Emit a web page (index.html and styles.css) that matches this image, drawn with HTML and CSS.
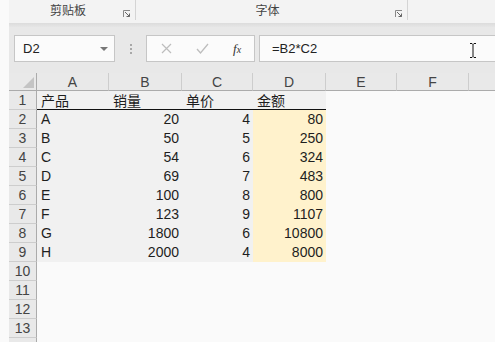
FILE: index.html
```html
<!DOCTYPE html>
<html lang="zh-CN">
<head>
    <meta charset="UTF-8">
    <title>Excel</title>
    <link rel="stylesheet" href="styles.css">
</head>
<body>
    <div class="window">
        <div class="ribbon">
            <div class="group g-clip">
                <span class="group-label">剪贴板</span>
                <svg class="launcher" width="8" height="8" viewBox="0 0 8 8"><path d="M0.5 7V0.5H7" fill="none" stroke="#888"/><path d="M2 2L6.5 6.5M3.5 6.5H6.5V3.5" fill="none" stroke="#666"/></svg>
            </div>
            <div class="group g-font">
                <span class="group-label">字体</span>
                <svg class="launcher" width="8" height="8" viewBox="0 0 8 8"><path d="M0.5 7V0.5H7" fill="none" stroke="#888"/><path d="M2 2L6.5 6.5M3.5 6.5H6.5V3.5" fill="none" stroke="#666"/></svg>
            </div>
            <div class="group g-rest"></div>
        </div>
        <div class="ribbon-shadow"></div>

        <div class="formula-bar">
            <div class="name-box">
                <span>D2</span>
                <span class="drop"></span>
            </div>
            <div class="grip"><i></i><i></i><i></i></div>
            <div class="fn-box">
                <svg width="11" height="11" viewBox="0 0 11 11"><path d="M1 1L10 10M10 1L1 10" stroke="#bdbdbd" stroke-width="1.2"/></svg>
                <svg width="13" height="11" viewBox="0 0 13 11"><path d="M1 6L4.5 10L12 1" fill="none" stroke="#bdbdbd" stroke-width="1.3"/></svg>
                <span class="fx">f<small>x</small></span>
            </div>
            <div class="formula">=B2*C2</div>
            <svg class="ibeam" width="8" height="15" viewBox="0 0 8 15"><path d="M1 0.5H3L4 1.5L5 0.5H7M4 1.5V13.5M1 14.5H3L4 13.5L5 14.5H7" fill="none" stroke="#111" stroke-width="1"/></svg>
        </div>

        <div class="sheet">
            <div class="corner"><span class="tri"></span></div>
            <div class="ch">A</div><div class="ch">B</div><div class="ch">C</div><div class="ch">D</div><div class="ch">E</div><div class="ch">F</div><div class="ch last"></div>

            <div class="rh">1</div><div class="c sel top cjk">产品</div><div class="c sel top cjk">销量</div><div class="c sel top cjk">单价</div><div class="c sel top cjk">金额</div><div class="c"></div><div class="c"></div><div class="c"></div>
            <div class="rh">2</div><div class="c sel">A</div><div class="c sel num">20</div><div class="c sel num">4</div><div class="c hl num">80</div><div class="c"></div><div class="c"></div><div class="c"></div>
            <div class="rh">3</div><div class="c sel">B</div><div class="c sel num">50</div><div class="c sel num">5</div><div class="c hl num">250</div><div class="c"></div><div class="c"></div><div class="c"></div>
            <div class="rh">4</div><div class="c sel">C</div><div class="c sel num">54</div><div class="c sel num">6</div><div class="c hl num">324</div><div class="c"></div><div class="c"></div><div class="c"></div>
            <div class="rh">5</div><div class="c sel">D</div><div class="c sel num">69</div><div class="c sel num">7</div><div class="c hl num">483</div><div class="c"></div><div class="c"></div><div class="c"></div>
            <div class="rh">6</div><div class="c sel">E</div><div class="c sel num">100</div><div class="c sel num">8</div><div class="c hl num">800</div><div class="c"></div><div class="c"></div><div class="c"></div>
            <div class="rh">7</div><div class="c sel">F</div><div class="c sel num">123</div><div class="c sel num">9</div><div class="c hl num">1107</div><div class="c"></div><div class="c"></div><div class="c"></div>
            <div class="rh">8</div><div class="c sel">G</div><div class="c sel num">1800</div><div class="c sel num">6</div><div class="c hl num">10800</div><div class="c"></div><div class="c"></div><div class="c"></div>
            <div class="rh">9</div><div class="c sel">H</div><div class="c sel num">2000</div><div class="c sel num">4</div><div class="c hl num">8000</div><div class="c"></div><div class="c"></div><div class="c"></div>
            <div class="rh">10</div><div class="c"></div><div class="c"></div><div class="c"></div><div class="c"></div><div class="c"></div><div class="c"></div><div class="c"></div>
            <div class="rh">11</div><div class="c"></div><div class="c"></div><div class="c"></div><div class="c"></div><div class="c"></div><div class="c"></div><div class="c"></div>
            <div class="rh">12</div><div class="c"></div><div class="c"></div><div class="c"></div><div class="c"></div><div class="c"></div><div class="c"></div><div class="c"></div>
            <div class="rh">13</div><div class="c"></div><div class="c"></div><div class="c"></div><div class="c"></div><div class="c"></div><div class="c"></div><div class="c"></div>
            <div class="rh"></div><div class="c"></div><div class="c"></div><div class="c"></div><div class="c"></div><div class="c"></div><div class="c"></div><div class="c"></div>
        </div>
    </div>
</body>
</html>
```

FILE: styles.css
```css
* {
    box-sizing: border-box;
}

html, body {
    margin: 0;
    height: 342px;
    overflow: hidden;
}

body {
    background: #fafafa;
    font-family: "Liberation Sans", "Noto Sans CJK SC", sans-serif;
    color: #1e1e1e;
}

.window {
    margin-left: 9px;
    position: relative;
}

/* ribbon */
.ribbon {
    display: flex;
    height: 23px;
    background: #f3f3f3;
}
.group {
    display: flex;
    align-items: flex-end;
    border-right: 1px solid #d4d4d4;
    height: 20px;
    padding-bottom: 2px;
}
.g-clip {
    width: 127px;
}
.g-font {
    width: 272px;
}
.g-rest {
    flex: 1;
    border-right: none;
}
.group-label {
    flex: 1;
    text-align: center;
    font-size: 12px;
    color: #444;
    padding-left: 4px;
    line-height: 14px;
}
.launcher {
    margin: 0 4px 0 0;
}

.ribbon-shadow {
    height: 4px;
    background: linear-gradient(#dcdcdc, #e6e6e6);
}

/* formula bar */
.formula-bar {
    display: flex;
    align-items: center;
    height: 46px;
    padding: 8px 0 11px 5px;
    background: #e8e8e8;
}
.name-box {
    display: flex;
    align-items: center;
    justify-content: space-between;
    width: 101px;
    height: 27px;
    padding: 0 6px 0 8px;
    background: #fbfbfb;
    border: 1px solid #c6c6c6;
    font-size: 13px;
    color: #222;
}
.drop {
    width: 0;
    height: 0;
    border-left: 4px solid transparent;
    border-right: 4px solid transparent;
    border-top: 4px solid #777;
}
.grip {
    display: flex;
    flex-direction: column;
    gap: 2px;
    width: 31px;
    align-items: center;
}
.grip i {
    width: 2px;
    height: 2px;
    background: #a8a8a8;
}
.fn-box {
    display: flex;
    align-items: center;
    gap: 24px;
    width: 109px;
    height: 27px;
    padding-left: 14px;
    background: #fbfbfb;
    border: 1px solid #c6c6c6;
}
.fx {
    font-family: "Liberation Serif", serif;
    font-style: italic;
    font-size: 13px;
    color: #333;
}
.fx small {
    font-size: 10px;
}
.formula {
    flex: 1;
    height: 27px;
    margin-left: 4px;
    padding: 5px 0 0 12px;
    background: #fbfbfb;
    border: 1px solid #c6c6c6;
    border-right: none;
    font-size: 13px;
    color: #222;
}
.ibeam {
    position: absolute;
    left: 460px;
    top: 43px;
}

/* sheet */
.sheet {
    display: grid;
    grid-template-columns: 28px 72px 73px 71px 73px 71px 72px 1fr;
    grid-template-rows: 18px;
    grid-auto-rows: 19px;
    font-size: 14px;
}
.corner {
    position: relative;
    background: #e9e9e9;
    border-right: 1px solid #ababab;
    border-bottom: 1px solid #ababab;
}
.tri {
    position: absolute;
    right: 2px;
    bottom: 2px;
    width: 0;
    height: 0;
    border-left: 11px solid transparent;
    border-bottom: 11px solid #c4c4c4;
}
.ch {
    background: #e9e9e9;
    border-right: 1px solid #cdcdcd;
    border-bottom: 1px solid #ababab;
    text-align: center;
    line-height: 18px;
    color: #444;
}
.ch.last {
    border-right: none;
}
.rh {
    background: #e9e9e9;
    border-right: 1px solid #ababab;
    border-bottom: 1px solid #cdcdcd;
    text-align: center;
    line-height: 19px;
    color: #444;
}
.c {
    padding: 0 3px 0 4px;
    line-height: 19px;
    white-space: nowrap;
    overflow: hidden;
}
.cjk {
    padding-top: 1px;
}
.num {
    text-align: right;
}
.sel {
    background: #f1f1f1;
}
.hl {
    background: #fff2cc;
}
.top {
    border-bottom: 1px solid #111;
}
```
